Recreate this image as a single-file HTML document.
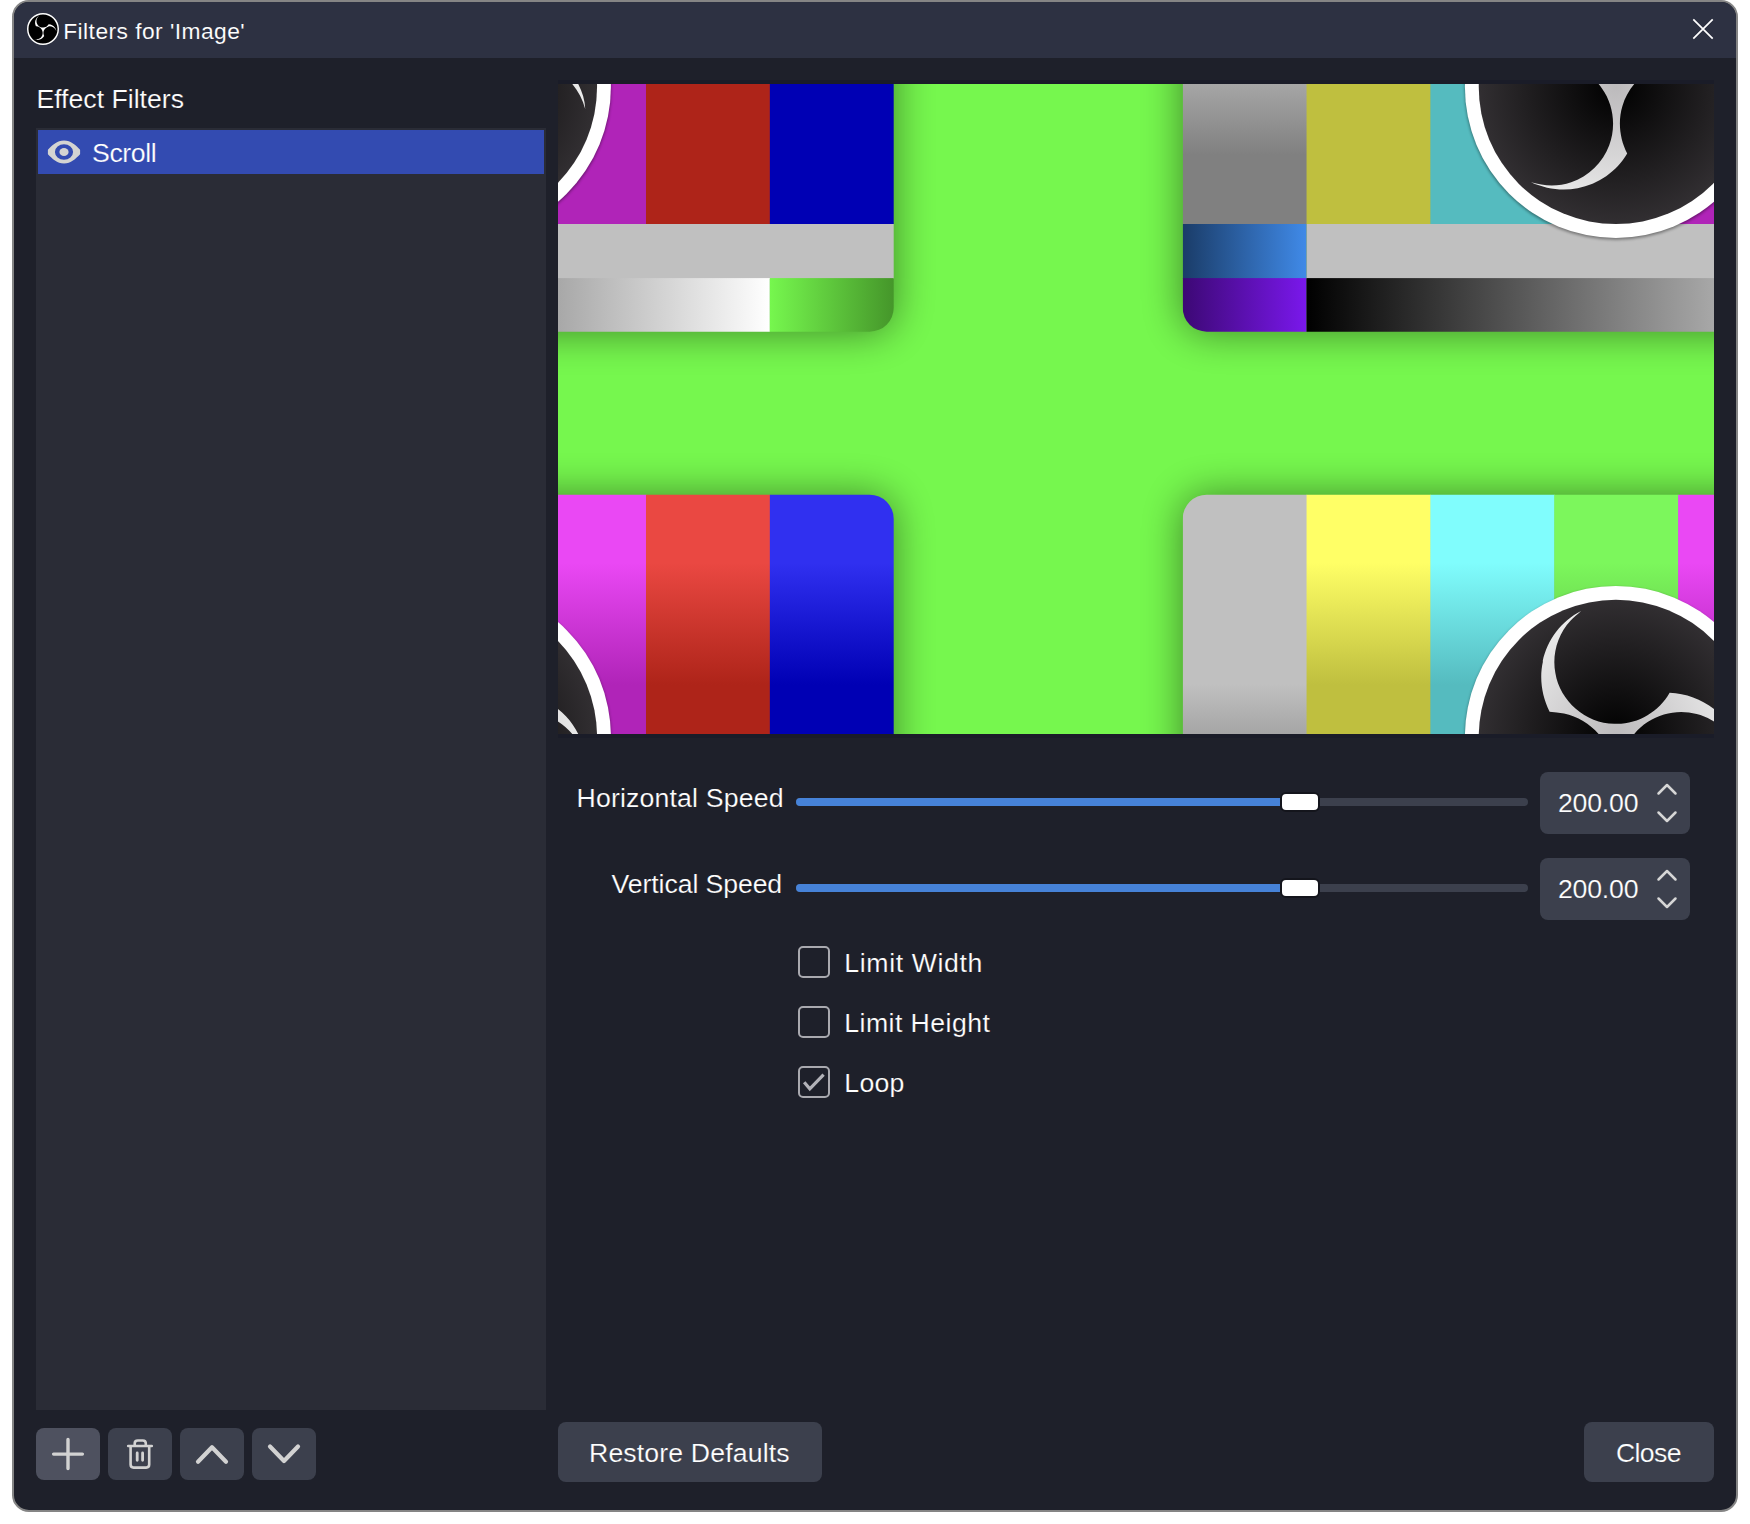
<!DOCTYPE html>
<html lang="en">
<head>
<meta charset="utf-8">
<title>Filters for 'Image'</title>
<style>
*{box-sizing:border-box;margin:0;padding:0}
html,body{width:1750px;height:1524px;background:#fff;overflow:hidden}
body{position:relative;font-family:"Liberation Sans",sans-serif;font-size:26.67px;color:#fefefe}
.abs{position:absolute}
#win{position:absolute;left:12px;top:0;width:1726px;height:1512px;border:2px solid #858585;border-radius:17px;background:#1e202a;overflow:hidden}
#title{position:absolute;left:0;top:0;width:100%;height:56px;background:#2d3142}
.t{position:absolute;white-space:nowrap;line-height:1;transform-origin:0 0;-webkit-text-stroke:0.2px #1e202a}
#tt{-webkit-text-stroke:0.12px #2d3142}
#sc{-webkit-text-stroke-color:#334bb1}
.n,#rd,#cl{-webkit-text-stroke-color:#3c404d}
#list{position:absolute;left:36px;top:128px;width:510px;height:1282px;background:#2a2c36}
#item{position:absolute;left:38px;top:130px;width:506px;height:44px;background:#334bb1}
.btn{position:absolute;background:#3c404d;border-radius:8px}
.groove{position:absolute;height:8px;border-radius:4px;background:#3c404d}
.fill{position:absolute;height:8px;border-radius:4px 0 0 4px;background:#4682d8}
.handle{position:absolute;width:40px;height:20px;border-radius:6px;background:#fff;border:2px solid #14151c}
.spin{position:absolute;left:1540px;width:150px;height:62px;border-radius:8px;background:#3c404d}
.cb{position:absolute;left:798px;width:32px;height:32px;border:2.7px solid #a9a9af;border-radius:5px}
#pv{position:absolute;left:558px;top:80px;width:1156px;height:658px;background:#1a1c28}
</style>
</head>
<body>
<div id="win"><div id="title"></div></div>

<!-- title bar -->
<svg class="abs" style="left:27px;top:13px" width="32" height="32" viewBox="0 0 24 24">
<circle cx="12" cy="12" r="11.6" fill="#000"/>
<path fill="#fff" d="M12,24C5.383,24,0,18.617,0,12S5.383,0,12,0s12,5.383,12,12S18.617,24,12,24z M12,1.109 C5.995,1.109,1.11,5.995,1.11,12C1.11,18.005,5.995,22.89,12,22.89S22.89,18.005,22.89,12C22.89,5.995,18.005,1.109,12,1.109z M6.182,5.99c0.352-1.698,1.503-3.229,3.05-3.996c-0.269,0.273-0.595,0.483-0.844,0.78c-1.02,1.1-1.48,2.692-1.199,4.156 c0.355,2.235,2.455,4.06,4.732,4.028c1.765,0.079,3.485-0.937,4.348-2.468c1.848,0.063,3.645,1.017,4.7,2.548 c0.54,0.799,0.962,1.736,0.991,2.711c-0.342-1.295-1.202-2.446-2.375-3.095c-1.135-0.639-2.529-0.802-3.772-0.425 c-1.56,0.448-2.849,1.723-3.293,3.293c-0.377,1.25-0.216,2.628,0.377,3.772c-0.825,1.429-2.315,2.449-3.932,2.756 c-1.244,0.261-2.551,0.059-3.709-0.464c1.036,0.302,2.161,0.355,3.191-0.011c1.381-0.457,2.522-1.567,3.024-2.935 c0.556-1.49,0.345-3.261-0.591-4.54c-0.7-1.007-1.803-1.717-3.002-1.969c-0.38-0.068-0.764-0.098-1.148-0.134 c-0.611-1.231-0.834-2.66-0.528-3.996L6.182,5.99z"/>
</svg>
<div class="t" id="tt" style="left:63.2px;top:20px;font-size:22.8px;color:#fff;letter-spacing:0.45px">Filters for 'Image'</div>
<svg class="abs" style="left:1689px;top:15px" width="28" height="28" viewBox="0 0 28 28"><path d="M4.3 4.3 L23.7 23.7 M23.7 4.3 L4.3 23.7" stroke="#fff" stroke-width="1.7" fill="none"/></svg>

<!-- left panel -->
<div class="t" id="ef" style="left:36.4px;top:86px">Effect Filters</div>
<div id="list"></div>
<div id="item"></div>
<svg class="abs" style="left:46px;top:138px" width="36" height="28" viewBox="0 0 36 28">
<path fill="#d4d4d2" fill-rule="evenodd" d="M1.900 11.800 C6.400 7.300 11 2.600 18 2.600 C25 2.600 29.600 7.300 34.100 11.800 L34.100 16.200 C29.600 20.700 25 25.400 18 25.400 C11 25.400 6.400 20.700 1.900 16.200 Z M18 6.360 A9.070 7.640 0 1 0 18 21.640 A9.070 7.640 0 1 0 18 6.360 Z"/>
<ellipse cx="18" cy="14" rx="4.600" ry="4.050" fill="#d4d4d2"/>
</svg>
<div class="t" id="sc" style="left:92px;top:140px;letter-spacing:-0.4px">Scroll</div>

<!-- bottom-left buttons -->
<div class="btn" style="left:36px;top:1428px;width:64px;height:52px;background:#4e515f"></div>
<div class="btn" style="left:108px;top:1428px;width:64px;height:52px"></div>
<div class="btn" style="left:180px;top:1428px;width:64px;height:52px"></div>
<div class="btn" style="left:252px;top:1428px;width:64px;height:52px"></div>
<svg class="abs" style="left:36px;top:1428px" width="280" height="52" viewBox="0 0 280 52" fill="none" stroke="#d2d2d2" stroke-linecap="round" stroke-linejoin="round">
<path d="M17.600 26.100 H46.400 M32 11.500 V40.500" stroke-width="3.400"/>
<g stroke-width="2.600"><path d="M92.200 18 H115.800 M98.700 17.500 V15.500 Q98.700 12.500 101.700 12.500 H106.800 Q109.800 12.500 109.800 15.500 V17.500 M94.600 18.500 V36.600 Q94.600 39.600 97.600 39.600 H110.200 Q113.200 39.600 113.200 36.600 V18.500"/><path d="M101.200 24.900 V32.300 M106.600 24.900 V32.300" stroke-width="2.800"/></g>
<path d="M162 33.700 L176 19.200 L190 33.700" stroke-width="4.200"/>
<path d="M234 18.500 L248 33 L262 18.500" stroke-width="4.200"/>
</svg>

<!-- preview -->
<div id="pv"></div>
<svg class="abs" style="left:558px;top:84px" width="1156" height="650" viewBox="0 0 1156 650">
<defs>
<linearGradient id="gG" gradientUnits="userSpaceOnUse" x1="0" y1="271.5" x2="0" y2="392"><stop offset="0" stop-color="#c0c0c0"/><stop offset="1" stop-color="#808080"/></linearGradient>
<linearGradient id="gY" gradientUnits="userSpaceOnUse" x1="0" y1="150" x2="0" y2="272"><stop offset="0" stop-color="#ffff66"/><stop offset="1" stop-color="#bfbf3f"/></linearGradient>
<linearGradient id="gC" gradientUnits="userSpaceOnUse" x1="0" y1="150" x2="0" y2="272"><stop offset="0" stop-color="#80fdfd"/><stop offset="1" stop-color="#55bbbf"/></linearGradient>
<linearGradient id="gGr" gradientUnits="userSpaceOnUse" x1="0" y1="150" x2="0" y2="272"><stop offset="0" stop-color="#7cf75c"/><stop offset="1" stop-color="#5dba45"/></linearGradient>
<linearGradient id="gM" gradientUnits="userSpaceOnUse" x1="0" y1="150" x2="0" y2="272"><stop offset="0" stop-color="#ea48f4"/><stop offset="1" stop-color="#b024b8"/></linearGradient>
<linearGradient id="gR" gradientUnits="userSpaceOnUse" x1="0" y1="150" x2="0" y2="272"><stop offset="0" stop-color="#ea4842"/><stop offset="1" stop-color="#ae2419"/></linearGradient>
<linearGradient id="gB" gradientUnits="userSpaceOnUse" x1="0" y1="150" x2="0" y2="272"><stop offset="0" stop-color="#3030f0"/><stop offset="1" stop-color="#0000b4"/></linearGradient>
<linearGradient id="hB" gradientUnits="userSpaceOnUse" x1="144.5" y1="0" x2="268.4" y2="0"><stop offset="0" stop-color="#1a3c68"/><stop offset="1" stop-color="#408ae8"/></linearGradient>
<linearGradient id="hP" gradientUnits="userSpaceOnUse" x1="144.5" y1="0" x2="268.4" y2="0"><stop offset="0" stop-color="#3c0874"/><stop offset="1" stop-color="#7a18ec"/></linearGradient>
<linearGradient id="hK" gradientUnits="userSpaceOnUse" x1="268.4" y1="0" x2="887.6" y2="0"><stop offset="0" stop-color="#000000"/><stop offset="1" stop-color="#ffffff"/></linearGradient>
<linearGradient id="hG" gradientUnits="userSpaceOnUse" x1="887.6" y1="0" x2="1011.5" y2="0"><stop offset="0" stop-color="#76f74e"/><stop offset="1" stop-color="#45962a"/></linearGradient>
<radialGradient id="rD" gradientUnits="userSpaceOnUse" cx="12" cy="12" r="11"><stop offset="0" stop-color="#000"/><stop offset="1" stop-color="#322f32"/></radialGradient>
<radialGradient id="rS" gradientUnits="userSpaceOnUse" cx="12" cy="12" r="10"><stop offset="0" stop-color="#bcbabc"/><stop offset="1" stop-color="#ececec"/></radialGradient>
<clipPath id="card"><rect x="144.5" y="82" width="867" height="487" rx="24"/></clipPath>
<filter id="sh" x="-15%" y="-25%" width="130%" height="150%"><feGaussianBlur stdDeviation="20"/></filter>
<filter id="sh2" x="-10%" y="-10%" width="120%" height="120%"><feGaussianBlur stdDeviation="0.13"/></filter>
<g id="tile">
<rect x="144.5" y="82.5" width="867" height="487" rx="24" fill="#000" opacity="0.46" filter="url(#sh)"/>
<g clip-path="url(#card)">
<rect x="144.50" y="81.3" width="124.36" height="380.0" fill="url(#gG)"/>
<rect x="268.36" y="81.3" width="124.36" height="380.0" fill="url(#gY)"/>
<rect x="392.21" y="81.3" width="124.36" height="380.0" fill="url(#gC)"/>
<rect x="516.07" y="81.3" width="124.36" height="380.0" fill="url(#gGr)"/>
<rect x="639.93" y="81.3" width="124.36" height="380.0" fill="url(#gM)"/>
<rect x="763.79" y="81.3" width="124.36" height="380.0" fill="url(#gR)"/>
<rect x="887.64" y="81.3" width="124.36" height="380.0" fill="url(#gB)"/>
<rect x="144.50" y="461.3" width="123.86" height="55.0" fill="url(#hB)"/>
<rect x="268.36" y="461.3" width="744.14" height="55.0" fill="#c0c0c0"/>
<rect x="144.50" y="515.4" width="123.86" height="55.2" fill="url(#hP)"/>
<rect x="268.36" y="515.4" width="619.29" height="55.2" fill="url(#hK)"/>
<rect x="887.64" y="515.4" width="124.86" height="55.2" fill="url(#hG)"/>
</g>
<g transform="translate(577.7 324.2) scale(12.583) translate(-12 -12)">
<circle cx="12" cy="12.12" r="12.02" fill="#000" opacity="0.4" filter="url(#sh2)"/>
<circle cx="12" cy="12" r="12" fill="#fff"/>
<circle cx="12" cy="12" r="10.9" fill="url(#rD)"/>
<path fill="url(#rS)" d="M6.182,5.99c0.352-1.698,1.503-3.229,3.05-3.996c-0.269,0.273-0.595,0.483-0.844,0.78c-1.02,1.1-1.48,2.692-1.199,4.156 c0.355,2.235,2.455,4.06,4.732,4.028c1.765,0.079,3.485-0.937,4.348-2.468c1.848,0.063,3.645,1.017,4.7,2.548 c0.54,0.799,0.962,1.736,0.991,2.711c-0.342-1.295-1.202-2.446-2.375-3.095c-1.135-0.639-2.529-0.802-3.772-0.425 c-1.56,0.448-2.849,1.723-3.293,3.293c-0.377,1.25-0.216,2.628,0.377,3.772c-0.825,1.429-2.315,2.449-3.932,2.756 c-1.244,0.261-2.551,0.059-3.709-0.464c1.036,0.302,2.161,0.355,3.191-0.011c1.381-0.457,2.522-1.567,3.024-2.935 c0.556-1.49,0.345-3.261-0.591-4.54c-0.7-1.007-1.803-1.717-3.002-1.969c-0.38-0.068-0.764-0.098-1.148-0.134 c-0.611-1.231-0.834-2.66-0.528-3.996L6.182,5.99z"/>
</g>
</g>
</defs>
<rect width="1156" height="650" fill="#76f74e"/>
<use href="#tile" x="-675.8" y="-321.3"/>
<use href="#tile" x="-675.8" y="328.7"/>
<use href="#tile" x="480.2" y="-321.3"/>
<use href="#tile" x="480.2" y="328.7"/>
</svg>

<!-- controls -->
<div class="t" id="hs" style="left:576.5px;top:785px;letter-spacing:0.17px">Horizontal Speed</div>
<div class="t" id="vs" style="left:611.6px;top:871px;letter-spacing:-0.1px">Vertical Speed</div>
<div class="groove" style="left:796px;top:798px;width:732px"></div>
<div class="fill" style="left:796px;top:798px;width:490px"></div>
<div class="handle" style="left:1280px;top:792px"></div>
<div class="groove" style="left:796px;top:884px;width:732px"></div>
<div class="fill" style="left:796px;top:884px;width:490px"></div>
<div class="handle" style="left:1280px;top:878px"></div>
<div class="spin" style="top:772px"></div>
<div class="spin" style="top:858px"></div>
<div class="t n" style="left:1558px;top:789.5px;letter-spacing:-0.2px">200.00</div>
<div class="t n" style="left:1558px;top:875.5px;letter-spacing:-0.2px">200.00</div>
<svg class="abs" style="left:1650px;top:772px" width="34" height="150" viewBox="0 0 34 150" fill="none" stroke="#d6d6d6" stroke-width="2.500" stroke-linecap="round" stroke-linejoin="round">
<path d="M8.500 21.500 L17 13 L25.500 21.500 M8.500 40.500 L17 49 L25.500 40.500"/>
<path d="M8.500 107.500 L17 99 L25.500 107.500 M8.500 126.500 L17 135 L25.500 126.500"/>
</svg>

<div class="cb" style="top:946px"></div>
<div class="cb" style="top:1006px"></div>
<div class="cb" style="top:1066px"></div>
<svg class="abs" style="left:798px;top:1066px" width="32" height="32" viewBox="0 0 32 32"><path d="M6.200 16.200 L11.800 22.800 L25.600 8.600" fill="none" stroke="#b2b2b8" stroke-width="3.200"/></svg>
<div class="t" id="lw" style="left:844.3px;top:949.5px;letter-spacing:0.63px">Limit Width</div>
<div class="t" id="lh" style="left:844.3px;top:1009.5px;letter-spacing:0.44px">Limit Height</div>
<div class="t" id="lp" style="left:844.3px;top:1069.5px;letter-spacing:0.27px">Loop</div>

<!-- bottom buttons -->
<div class="btn" style="left:558px;top:1422px;width:264px;height:60px"></div>
<div class="btn" style="left:1584px;top:1422px;width:130px;height:60px"></div>
<div class="t" id="rd" style="left:589px;top:1440px;letter-spacing:0.14px">Restore Defaults</div>
<div class="t" id="cl" style="left:1616px;top:1440px;letter-spacing:-0.65px">Close</div>
</body>
</html>
